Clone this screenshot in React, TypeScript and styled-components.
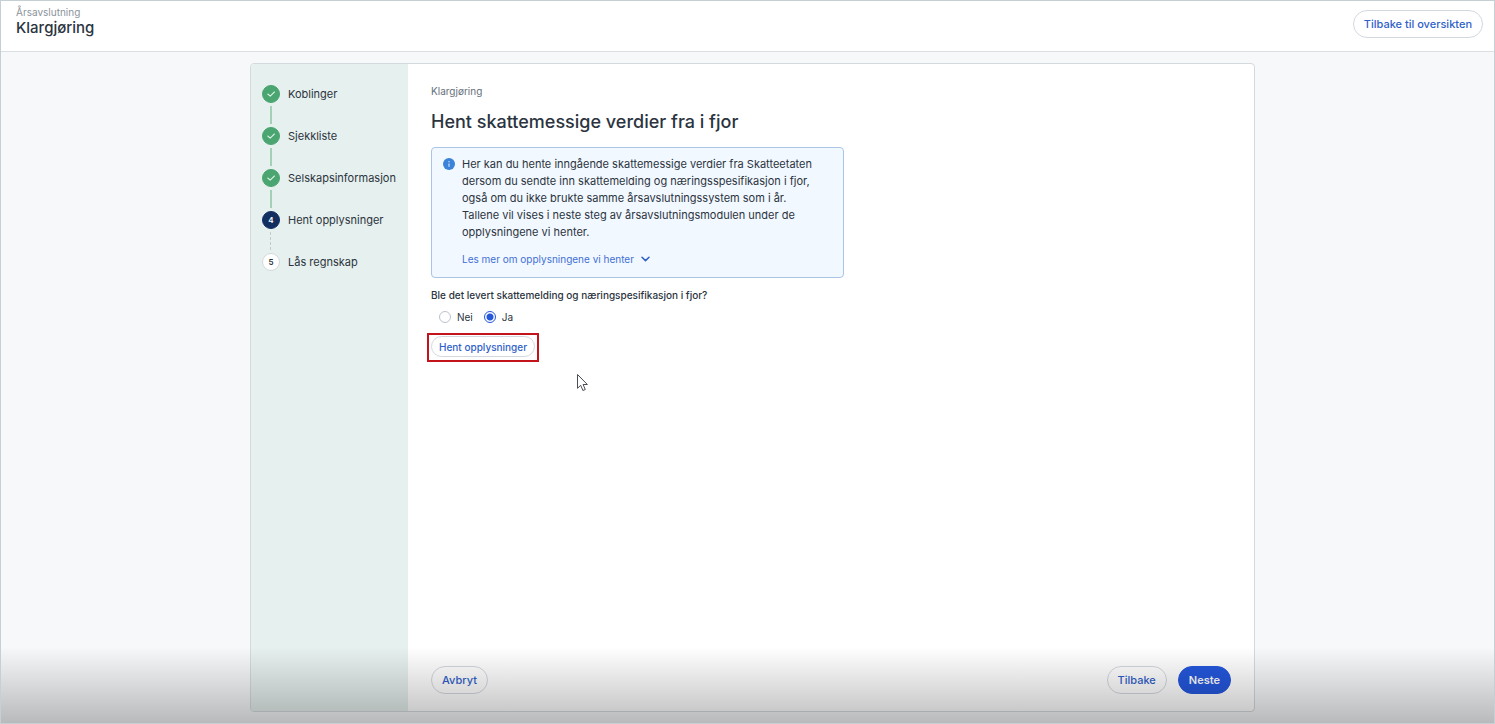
import React from "react";
import styled, { createGlobalStyle } from "styled-components";

const GlobalStyle = createGlobalStyle`
  *, *::before, *::after { box-sizing: border-box; }
  body {
    margin: 0;
    font-family: Inter, "Liberation Sans", sans-serif;
    color: #2b3440;
    background: #f6f8fa;
  }
  h1, h2, p, ol, fieldset { margin: 0; padding: 0; }
  button { font-family: inherit; cursor: pointer; }
`;

const Page = styled.div`
  position: relative;
  display: flex;
  flex-direction: column;
  min-height: 100vh;
  border: 1px solid #c6d0d4;
`;

const Header = styled.header`
  display: flex;
  justify-content: space-between;
  align-items: flex-start;
  height: 51px;
  padding: 4px 11px 0 15px;
  background: #fff;
  border-bottom: 1px solid #d9dfe3;
`;

const Overline = styled.p<{ $tone?: string }>`
  font-size: 10px;
  line-height: 14px;
  color: ${(p) => p.$tone ?? "#66707a"};
`;

const PageTitle = styled.h1`
  font-size: 15px;
  line-height: 18px;
  font-weight: 500;
`;

const Button = styled.button<{ $primary?: boolean; $small?: boolean }>`
  height: ${(p) => (p.$small ? 21 : 28)}px;
  padding: 0 ${(p) => (p.$small ? 7 : 10)}px;
  border: 1px solid ${(p) => (p.$primary ? "#2457dc" : "#d3d8df")};
  border-radius: 14px;
  background: ${(p) => (p.$primary ? "#2457dc" : "#fff")};
  color: ${(p) => (p.$primary ? "#fff" : "#2f5fc9")};
  font-size: ${(p) => (p.$small ? 10 : 11)}px;
  line-height: 16px;
  font-weight: ${(p) => (p.$primary ? 600 : 500)};
  white-space: nowrap;
`;

const HeaderAction = styled.div`
  padding-top: 5px;
`;

const Main = styled.main`
  flex: 1;
  display: flex;
  justify-content: center;
  padding: 11px 0 11px 10px;
`;

const Card = styled.div`
  display: flex;
  width: 100%;
  max-width: 1005px;
  border: 1px solid #d3dade;
  border-radius: 4px;
  background: #fff;
  overflow: hidden;
`;

const Sidebar = styled.nav`
  flex: none;
  width: 157px;
  padding: 21px 0 0 11px;
  background: #e6f0ee;
`;

const StepList = styled.ol`
  list-style: none;
`;

const StepItem = styled.li<{ $line: "solid" | "dotted" | "none" }>`
  position: relative;
  display: flex;
  align-items: flex-start;
  gap: 8px;
  height: 42px;
  font-size: 11px;
  line-height: 18px;

  &::after {
    content: "";
    position: absolute;
    left: 8px;
    top: 21px;
    height: 18px;
    border-left: ${(p) =>
      p.$line === "none" ? "0" : p.$line === "solid" ? "2px solid #a3d1b5" : "1px dashed #c2cccd"};
  }
`;

const Marker = styled.span<{ $state: "done" | "current" | "next" }>`
  display: flex;
  align-items: center;
  justify-content: center;
  width: 18px;
  height: 18px;
  border-radius: 50%;
  border: 1px solid ${(p) => ({ done: "#4aa571", current: "#122f60", next: "#d2d9dc" })[p.$state]};
  background: ${(p) => ({ done: "#4aa571", current: "#122f60", next: "#fff" })[p.$state]};
  color: ${(p) => (p.$state === "next" ? "#2b3440" : "#fff")};
  font-size: 8px;
  font-weight: 600;
`;

const Content = styled.section`
  flex: 1;
  display: flex;
  flex-direction: column;
  align-items: flex-start;
  min-width: 0;
  padding: 20px 23px 17px;
`;

const Title = styled.h2`
  margin: 11px 0 12px;
  font-size: 18px;
  line-height: 26px;
  font-weight: 500;
`;

const InfoBox = styled.div`
  display: flex;
  gap: 7px;
  width: 100%;
  max-width: 413px;
  padding: 8px 20px 10px 11px;
  border: 1px solid #a9c4e4;
  border-radius: 4px;
  background: #f2f8ff;
`;

const InfoIcon = styled.svg`
  flex: none;
  margin-top: 2px;
`;

const InfoText = styled.p`
  font-size: 11px;
  line-height: 17px;
`;

const MoreButton = styled.button`
  display: flex;
  align-items: center;
  gap: 7px;
  margin-top: 10px;
  padding: 0;
  border: 0;
  background: none;
  color: #3e70d6;
  font-size: 10px;
  line-height: 16px;
`;

const Question = styled.fieldset`
  margin-top: 9px;
  border: 0;
`;

const Legend = styled.legend`
  padding: 0;
  font-size: 10px;
  line-height: 16px;
  font-weight: 500;
`;

const Options = styled.div`
  display: flex;
  gap: 11px;
  padding: 6px 0 0 8px;
`;

const Option = styled.label`
  display: flex;
  align-items: center;
  gap: 6px;
  font-size: 10px;
  line-height: 16px;
`;

const Radio = styled.input`
  appearance: none;
  width: 12px;
  height: 12px;
  margin: 0;
  border: 1px solid #bcc3cb;
  border-radius: 50%;
  background: #fff;

  &:checked {
    border-color: #2457dc;
    background: radial-gradient(circle, #2457dc 3px, #fff 4px);
  }
`;

const Highlight = styled.div`
  display: flex;
  margin: 8px 0 0 -4px;
  padding: 1px 2px 3px;
  border: 2px solid #c4141b;
`;

const Footer = styled.footer`
  display: flex;
  gap: 11px;
  align-self: stretch;
  margin-top: auto;
`;

const Spacer = styled.span`
  flex: 1;
`;

const Shade = styled.div`
  position: absolute;
  inset: auto 0 0 0;
  height: 76px;
  background: linear-gradient(rgba(0, 0, 0, 0), rgba(0, 0, 0, 0.25));
  pointer-events: none;
`;

const Cursor = styled.svg`
  position: absolute;
  left: 575px;
  top: 372px;
`;

type Step = { label: string; state: "done" | "current" | "next"; line: "solid" | "dotted" | "none" };

const steps: Step[] = [
  { label: "Koblinger", state: "done", line: "solid" },
  { label: "Sjekkliste", state: "done", line: "solid" },
  { label: "Selskapsinformasjon", state: "done", line: "solid" },
  { label: "Hent opplysninger", state: "current", line: "dotted" },
  { label: "Lås regnskap", state: "next", line: "none" },
];

export default function App() {
  return (
    <>
      <GlobalStyle />
      <Page>
        <Header>
          <div>
            <Overline $tone="#8b939b">Årsavslutning</Overline>
            <PageTitle>Klargjøring</PageTitle>
          </div>
          <HeaderAction>
            <Button type="button">Tilbake til oversikten</Button>
          </HeaderAction>
        </Header>
        <Main>
          <Card>
            <Sidebar aria-label="Steg">
              <StepList>
                {steps.map((step, i) => (
                  <StepItem key={step.label} $line={step.line}>
                    <Marker $state={step.state}>
                      {step.state === "done" ? (
                        <svg width="10" height="10" viewBox="0 0 10 10" fill="none" aria-hidden="true">
                          <path d="M1.8 5 4.2 7.1 8.4 3" stroke="#d9f2e2" strokeWidth="1.1" strokeLinecap="round" strokeLinejoin="round" />
                        </svg>
                      ) : (
                        i + 1
                      )}
                    </Marker>
                    {step.label}
                  </StepItem>
                ))}
              </StepList>
            </Sidebar>
            <Content>
              <Overline>Klargjøring</Overline>
              <Title>Hent skattemessige verdier fra i fjor</Title>
              <InfoBox>
                <InfoIcon width="12" height="12" viewBox="0 0 12 12" aria-hidden="true">
                  <circle cx="6" cy="6" r="6" fill="#3b82d9" />
                  <path d="M6 5.4v3.4M6 3v1.2" stroke="#d8eaff" strokeWidth="1.1" />
                </InfoIcon>
                <div>
                  <InfoText>
                    Her kan du hente inngående skattemessige verdier fra Skatteetaten dersom du sendte inn
                    skattemelding og næringsspesifikasjon i fjor, også om du ikke brukte samme
                    årsavslutningssystem som i år. Tallene vil vises i neste steg av årsavslutningsmodulen
                    under de opplysningene vi henter.
                  </InfoText>
                  <MoreButton type="button">
                    Les mer om opplysningene vi henter
                    <svg width="9" height="6" viewBox="0 0 9 6" fill="none" aria-hidden="true">
                      <path d="M1 1.2 4.5 4.6 8 1.2" stroke="#2f5fc9" strokeWidth="1.5" strokeLinecap="round" strokeLinejoin="round" />
                    </svg>
                  </MoreButton>
                </div>
              </InfoBox>
              <Question>
                <Legend>Ble det levert skattemelding og næringspesifikasjon i fjor?</Legend>
                <Options>
                  <Option>
                    <Radio type="radio" name="levert" value="nei" />
                    Nei
                  </Option>
                  <Option>
                    <Radio type="radio" name="levert" value="ja" defaultChecked />
                    Ja
                  </Option>
                </Options>
              </Question>
              <Highlight>
                <Button type="button" $small>Hent opplysninger</Button>
              </Highlight>
              <Footer>
                <Button type="button">Avbryt</Button>
                <Spacer />
                <Button type="button">Tilbake</Button>
                <Button type="button" $primary>Neste</Button>
              </Footer>
            </Content>
          </Card>
        </Main>
        <Shade />
        <Cursor width="13" height="19" viewBox="0 0 13 19" aria-hidden="true">
          <path d="M1.5 1.5v13.8l3.2-3 2.2 5.2 2.4-1-2.2-5h4.3z" fill="#fff" stroke="#4a4d52" strokeWidth="1" strokeLinejoin="round" />
        </Cursor>
      </Page>
    </>
  );
}
